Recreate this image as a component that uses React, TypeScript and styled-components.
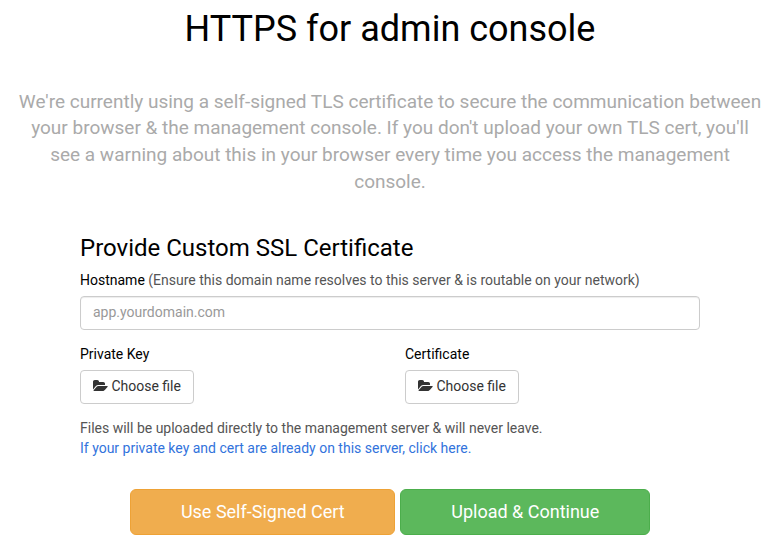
import React from "react";
import styled, { createGlobalStyle } from "styled-components";

const GlobalStyle = createGlobalStyle`
  *, *::before, *::after { box-sizing: border-box; }
  body {
    margin: 0;
    background: #fff;
    color: #000;
    font: 14px/20px Roboto, sans-serif;
    overflow: hidden;
  }
`;

const Page = styled.main`
  padding: 9px 15px 0;
`;

const Title = styled.h1`
  margin: 0;
  font-size: 36px;
  line-height: 40px;
  font-weight: 400;
  text-align: center;
`;

const Lead = styled.p`
  margin: 39.8px 0 0;
  font-size: 19px;
  line-height: 26.6px;
  color: #aaa;
  text-align: center;
`;

const Form = styled.form`
  width: 620px;
  margin: 39.8px auto 0;
`;

const SectionTitle = styled.h2`
  margin: 0 0 9px;
  font-size: 24px;
  line-height: 26px;
  font-weight: 400;
`;

const Label = styled.label`
  display: block;
  margin-bottom: 6px;
`;

const Muted = styled.span`
  color: #555;
`;

const HostInput = styled.input`
  display: block;
  width: 100%;
  height: 34px;
  padding: 5px 12px 7px;
  border: 1px solid #ccc;
  border-radius: 4px;
  box-shadow: inset 0 1px 1px rgba(0, 0, 0, 0.075);
  font: inherit;
  &::placeholder { color: #999; opacity: 1; }
`;

const FileGrid = styled.div`
  display: grid;
  grid-template-columns: 325px 1fr;
  margin-top: 14px;
`;

const FileButton = styled.button`
  display: flex;
  align-items: center;
  gap: 3.4px;
  height: 34px;
  padding: 0 12px 2px;
  border: 1px solid #ccc;
  border-radius: 4px;
  background: #fff;
  color: #333;
  font: inherit;
`;

const FolderGlyph = styled.svg`
  width: 15px;
  height: 13px;
  fill: currentColor;
`;

const Note = styled.p`
  margin: 14px 0 0;
  color: #555;
`;

const Link = styled.a`
  display: block;
  color: #3273dc;
  text-decoration: none;
`;

const Actions = styled.div`
  display: flex;
  justify-content: center;
  gap: 5px;
  margin-top: 31px;
`;

const ActionButton = styled.button<{ $tone: "warning" | "success" }>`
  width: ${({ $tone }) => ($tone === "warning" ? 265 : 250)}px;
  height: 46px;
  padding: 0 0 0 0.6px;
  border: 1px solid ${({ $tone }) => ($tone === "warning" ? "#eea236" : "#4cae4c")};
  border-radius: 6px;
  background: ${({ $tone }) => ($tone === "warning" ? "#f0ad4e" : "#5cb85c")};
  color: #fff;
  font: 18px/24px Roboto, sans-serif;
`;

function FolderOpenIcon() {
  return (
    <FolderGlyph viewBox="0 0 1920 1664" aria-hidden="true">
      <path d="M1879 952q0 31-31 66l-336 396q-43 51-120.500 86.500t-143.500 35.500h-1088q-34 0-60.500-13t-26.500-43q0-31 31-66l336-396q43-51 120.500-86.500t143.500-35.500h1088q34 0 60.500 13t26.500 43zM1536 608v160h-832q-94 0-197 47.500t-164 119.500l-337 396-5 6q0-4-.5-12.500t-.5-12.500v-960q0-92 66-158t158-66h320q92 0 158 66t66 158v32h544q92 0 158 66t66 158z" />
    </FolderGlyph>
  );
}

function FileField({ label }: { label: string }) {
  return (
    <div>
      <Label>{label}</Label>
      <FileButton type="button">
        <FolderOpenIcon />
        Choose file
      </FileButton>
    </div>
  );
}

export default function App() {
  return (
    <Page>
      <GlobalStyle />
      <Title>HTTPS for admin console</Title>
      <Lead>
        We're currently using a self-signed TLS certificate to secure the communication between
        your browser &amp; the management console. If you don't upload your own TLS cert, you'll
        see a warning about this in your browser every time you access the management console.
      </Lead>
      <Form>
        <SectionTitle>Provide Custom SSL Certificate</SectionTitle>
        <Label htmlFor="hostname">
          Hostname{" "}
          <Muted>(Ensure this domain name resolves to this server &amp; is routable on your network)</Muted>
        </Label>
        <HostInput id="hostname" placeholder="app.yourdomain.com" />
        <FileGrid>
          <FileField label="Private Key" />
          <FileField label="Certificate" />
        </FileGrid>
        <Note>
          Files will be uploaded directly to the management server &amp; will never leave.
          <Link>If your private key and cert are already on this server, click here.</Link>
        </Note>
        <Actions>
          <ActionButton type="button" $tone="warning">Use Self-Signed Cert</ActionButton>
          <ActionButton type="button" $tone="success">Upload &amp; Continue</ActionButton>
        </Actions>
      </Form>
    </Page>
  );
}
